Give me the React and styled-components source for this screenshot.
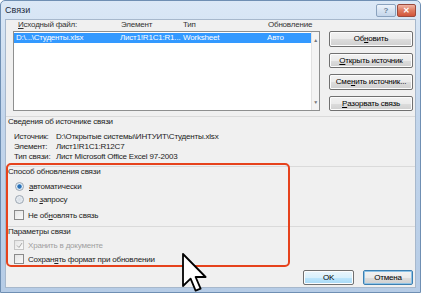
import styled, { createGlobalStyle } from 'styled-components';

const GlobalStyle = createGlobalStyle`
  html, body {
    margin: 0;
    padding: 0;
    background: #ffffff;
  }
  body {
    font-family: 'Liberation Sans', Arial, sans-serif;
  }
`;

const Window = styled.div`
  position: relative;
  width: 421px;
  height: 293px;
  box-sizing: border-box;
  background: linear-gradient(#dbe8f6, #c3d6ec 40%, #b6cce6);
  border: 1px solid #6f8fb3;
  border-radius: 5px 5px 0 0;
  display: flex;
  flex-direction: column;
  overflow: hidden;
`;

const TitleBar = styled.div`
  height: 18px;
  display: flex;
  align-items: center;
  padding: 0 4px 0 4px;
  flex-shrink: 0;
`;

const Title = styled.div`
  flex: 1;
  font-size: 9px;
  color: #1e2b3c;
`;

const TitleButton = styled.div`
  width: ${(p) => p.w}px;
  height: 13px;
  margin-left: 1px;
  border: 1px solid ${(p) => (p.close ? '#9a4a3c' : '#8aa2be')};
  border-radius: 2px;
  background: ${(p) =>
    p.close
      ? 'linear-gradient(#f0b4a4, #de7a5f 50%, #d2553a)'
      : 'linear-gradient(#eef4fb, #d6e3f2 50%, #c5d6ea)'};
  display: flex;
  align-items: center;
  justify-content: center;
  font-size: 8px;
  font-weight: bold;
  color: ${(p) => (p.close ? '#ffffff' : '#6b7f98')};
  box-sizing: border-box;
`;

const Client = styled.div`
  flex: 1;
  margin: 0 4px 4px 4px;
  background: #f0f0f0;
  border: 1px solid #a7b8cc;
  display: flex;
  flex-direction: column;
  font-size: 8px;
  letter-spacing: -0.2px;
  color: #000;
`;

const ColHeaders = styled.div`
  height: 10px;
  line-height: 10px;
  display: flex;
  padding-left: 12px;
`;

const ColHead = styled.span`
  width: ${(p) => p.w}px;
  color: #333;
`;

const Top = styled.div`
  display: flex;
  gap: 9px;
  padding-left: 7px;
  margin-top: 1px;
  height: 80px;
`;

const ListBox = styled.div`
  width: 307px;
  height: 80px;
  box-sizing: border-box;
  border: 1px solid #8e8f8f;
  background: #fff;
  display: flex;
`;

const ListRows = styled.div`
  flex: 1;
  padding-top: 1px;
`;

const ListRow = styled.div`
  display: flex;
  height: 10px;
  line-height: 10px;
  background: #3399ff;
  color: #fff;
  padding-left: 2px;
`;

const Cell = styled.span`
  width: ${(p) => p.w}px;
  flex-shrink: 0;
  white-space: nowrap;
`;

const ScrollBar = styled.div`
  width: 9px;
  background: #f4f4f4;
  border-left: 1px solid #e2e2e2;
  display: flex;
  flex-direction: column;
  justify-content: space-between;
  align-items: center;
  padding: 5px 0 5px;
  font-size: 5px;
  color: #777;
`;

const ButtonCol = styled.div`
  display: flex;
  flex-direction: column;
  gap: 6px;
`;

const Button = styled.div`
  width: ${(p) => p.w || 84}px;
  height: ${(p) => p.h || 16}px;
  box-sizing: border-box;
  border: 1px solid ${(p) => (p.focus ? '#3c7fb1' : '#707070')};
  border-radius: 2px;
  background: ${(p) =>
    p.hot
      ? 'linear-gradient(#eaf6fd, #d9f0fc 50%, #bee6fd 51%, #a7d9f5)'
      : 'linear-gradient(#f2f2f2, #ebebeb 50%, #dddddd 51%, #cfcfcf)'};
  box-shadow: ${(p) => (p.focus ? 'inset 0 0 0 1px #8fc3e6' : 'inset 0 0 0 1px #fcfcfc')};
  display: flex;
  align-items: center;
  justify-content: center;
  font-size: 8px;
  color: #000;
  white-space: nowrap;
`;

const Heading = styled.div`
  margin-top: ${(p) => p.top}px;
  border-top: 1px solid #dadada;
  height: 10px;
  line-height: 10px;
  padding-left: 2px;
  color: #222;
`;

const Details = styled.div`
  margin-top: 5px;
`;

const Detail = styled.div`
  display: flex;
  height: 10px;
  line-height: 10px;
  padding-left: 8px;
  color: #222;
`;

const DetailLabel = styled.span`
  width: 42px;
`;

const OptionRow = styled.div`
  display: flex;
  align-items: center;
  height: ${(p) => p.h}px;
  margin-top: ${(p) => p.top || 0}px;
  padding-left: ${(p) => (p.radio ? 9 : 8)}px;
  color: ${(p) => (p.disabled ? '#a0a0a0' : '#222')};
`;

const Radio = styled.span`
  width: 7px;
  height: 7px;
  border-radius: 50%;
  border: 1px solid #9aa5b1;
  background: ${(p) =>
    p.checked
      ? 'radial-gradient(circle, #2a6fb4 0 1.8px, #9fc8ea 2.3px, #e6eef6 3px)'
      : 'radial-gradient(circle, #d6dde5, #f1f4f7)'};
  margin-right: 5px;
  flex-shrink: 0;
`;

const Check = styled.span`
  width: 8px;
  height: 8px;
  border: 1px solid ${(p) => (p.disabled ? '#c4c4c4' : '#8a8a8a')};
  background: linear-gradient(135deg, #e4e4e4, #fafafa);
  margin-right: 4px;
  flex-shrink: 0;
  display: flex;
  align-items: center;
  justify-content: center;
`;

const Spacer = styled.div`
  flex: 1;
`;

const Footer = styled.div`
  display: flex;
  justify-content: flex-end;
  gap: 9px;
  padding: 0 2px 2px 0;
`;

const RedFrame = styled.div`
  position: absolute;
  left: 5px;
  top: 162px;
  width: 284px;
  height: 104px;
  box-sizing: border-box;
  border: 2px solid #e6421c;
  border-radius: 5px;
  pointer-events: none;
`;

const Cursor = styled.svg`
  position: absolute;
  left: 181px;
  top: 252px;
`;

const Tick = () => (
  <svg width="7" height="7" viewBox="0 0 7 7">
    <path d="M1 3.5 L3 5.5 L6 1" fill="none" stroke="#a8a8a8" strokeWidth="1" />
  </svg>
);

export default function App() {
  return (
    <>
      <GlobalStyle />
      <Window>
        <TitleBar>
          <Title>Связи</Title>
          <TitleButton w={20}>?</TitleButton>
          <TitleButton w={19} close>
            ✕
          </TitleButton>
        </TitleBar>
        <Client>
          <ColHeaders>
            <ColHead w={103}>
              <u>И</u>сходный файл:
            </ColHead>
            <ColHead w={62}>Элемент</ColHead>
            <ColHead w={85}>Тип</ColHead>
            <ColHead w={60}>Обновление</ColHead>
          </ColHeaders>
          <Top>
            <ListBox>
              <ListRows>
                <ListRow>
                  <Cell w={104}>D:\...\Студенты.xlsx</Cell>
                  <Cell w={63}>Лист1!R1C1:R1...</Cell>
                  <Cell w={84}>Worksheet</Cell>
                  <Cell w={44}>Авто</Cell>
                </ListRow>
              </ListRows>
              <ScrollBar>
                <span>▲</span>
                <span>▼</span>
              </ScrollBar>
            </ListBox>
            <ButtonCol>
              <Button>
                Об<u>н</u>овить
              </Button>
              <Button>
                <u>О</u>ткрыть источник
              </Button>
              <Button>
                Сме<u>н</u>ить источник...
              </Button>
              <Button>
                <u>Р</u>азорвать связь
              </Button>
            </ButtonCol>
          </Top>
          <Heading top={5}>Сведения об источнике связи</Heading>
          <Details>
            <Detail>
              <DetailLabel>Источник:</DetailLabel>
              <span>D:\Открытые системы\ИНТУИТ\Студенты.xlsx</span>
            </Detail>
            <Detail>
              <DetailLabel>Элемент:</DetailLabel>
              <span>Лист1!R1C1:R12C7</span>
            </Detail>
            <Detail>
              <DetailLabel>Тип связи:</DetailLabel>
              <span>Лист Microsoft Office Excel 97-2003</span>
            </Detail>
          </Details>
          <Heading top={4}>Способ обновления связи</Heading>
          <OptionRow h={13} top={3} radio>
            <Radio checked />
            <span>
              <u>а</u>втоматически
            </span>
          </OptionRow>
          <OptionRow h={13} radio>
            <Radio />
            <span>
              по <u>з</u>апросу
            </span>
          </OptionRow>
          <OptionRow h={18}>
            <Check />
            <span>
              Не об<u>н</u>овлять связь
            </span>
          </OptionRow>
          <Heading top={2}>Параметры связи</Heading>
          <OptionRow h={14} top={1} disabled>
            <Check disabled>
              <Tick />
            </Check>
            <span>Хранить в документе</span>
          </OptionRow>
          <OptionRow h={14}>
            <Check />
            <span>
              Сохран<u>я</u>ть формат при обновлении
            </span>
          </OptionRow>
          <Spacer />
          <Footer>
            <Button w={51} h={15} hot>
              OK
            </Button>
            <Button w={50} h={15} focus>
              Отмена
            </Button>
          </Footer>
        </Client>
        <RedFrame />
        <Cursor width="26" height="40" viewBox="0 0 13 20">
          <path
            d="M0.5 0.5 L0.5 16.5 L4.3 12.8 L6.8 18.8 L9.3 17.8 L6.8 12 L11.8 12 Z"
            fill="#ffffff"
            stroke="#000000"
            strokeWidth="0.9"
            strokeLinejoin="round"
          />
        </Cursor>
      </Window>
    </>
  );
}
